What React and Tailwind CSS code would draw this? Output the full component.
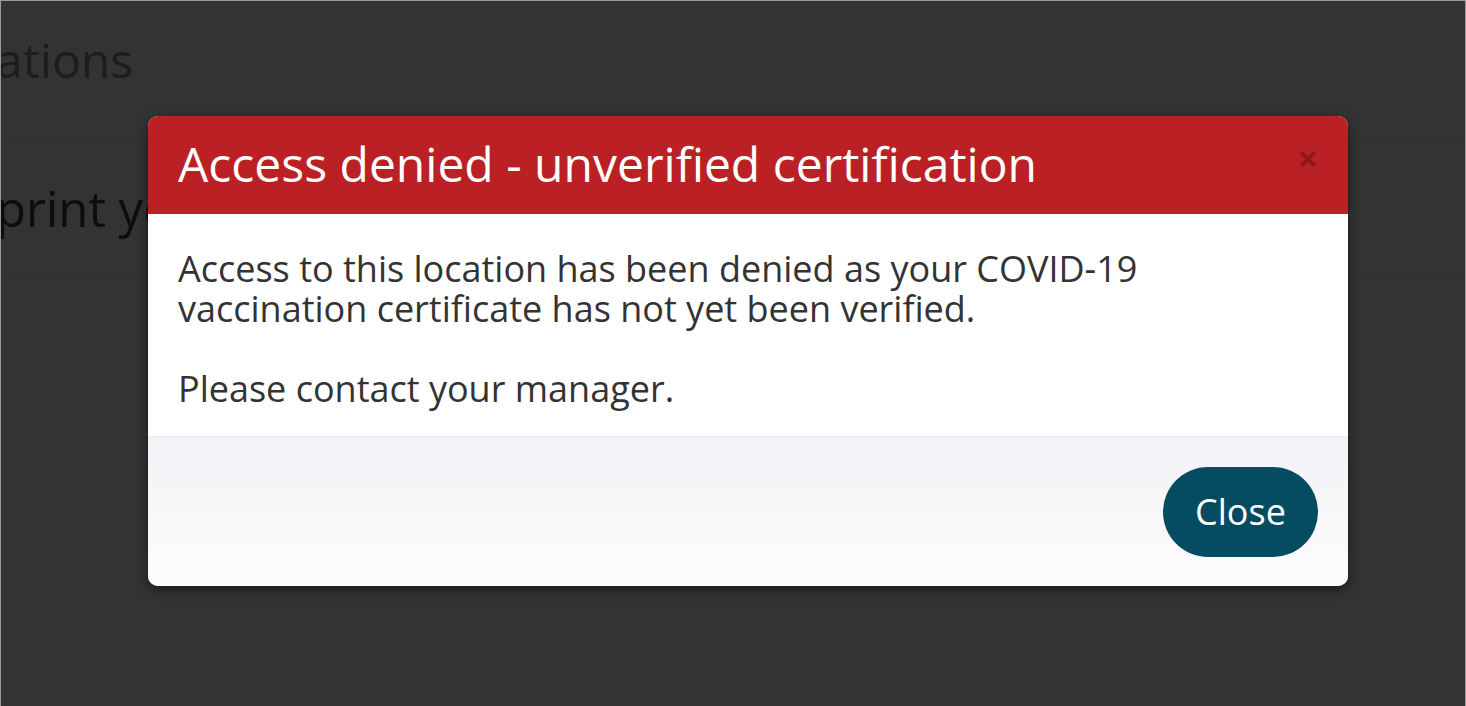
import React from "react";

const App = () => {
  return (
    <div
      className="relative w-[1466px] h-[706px] overflow-hidden bg-white border-l border-t border-r border-[#9a9a9a]"
      style={{ fontFamily: '"Open Sans", "Noto Sans", sans-serif' }}
    >
      {/* Page behind the dialog */}
      <div className="text-[#8a9096]">
        <div className="h-[141px] border-b border-[#e4e4e4] pt-[27px] -ml-[5px]">
          <h2 className="text-[48px] leading-[64px]">ations</h2>
        </div>
        <div className="h-[133px] border-b border-[#e4e4e4] pt-[36px] -ml-[5px]">
          <p className="text-[49px] leading-[60px] text-[#3c4045]">print your certificate</p>
        </div>
      </div>

      {/* Overlay */}
      <div className="absolute inset-0 bg-black/80 flex justify-start items-start pt-[115px] pl-[147px]">
        <div className="w-[1200px] rounded-[10px] overflow-hidden bg-white shadow-[0_4px_12px_rgba(0,0,0,0.5)]">
          {/* Header */}
          <div className="h-[98px] bg-[#bb2124] flex items-center justify-between pl-[30px] pr-[30px]">
            <h3 className="text-white text-[48px] leading-none pb-[2px]">
              Access denied - unverified certification
            </h3>
            <button className="text-black/25 font-bold text-[36px] leading-none pb-[12px]">
              ×
            </button>
          </div>

          {/* Body */}
          <div className="pt-[35px] pb-[27px] px-[30px] text-[#333333] text-[36px] leading-[40px]">
            <p>
              Access to this location has been denied as your COVID-19
              <br />
              vaccination certificate has not yet been verified.
              <br />
              <br />
              Please contact your manager.
            </p>
          </div>

          {/* Footer */}
          <div className="h-[150px] border-t border-[#ececf0] bg-gradient-to-b from-[#f2f2f6] to-[#fdfdfe] flex items-center justify-end pr-[30px]">
            <button className="h-[90px] w-[155px] rounded-full bg-[#054c63] text-white text-[36px] leading-none">
              Close
            </button>
          </div>
        </div>
      </div>
    </div>
  );
};

export default App;
